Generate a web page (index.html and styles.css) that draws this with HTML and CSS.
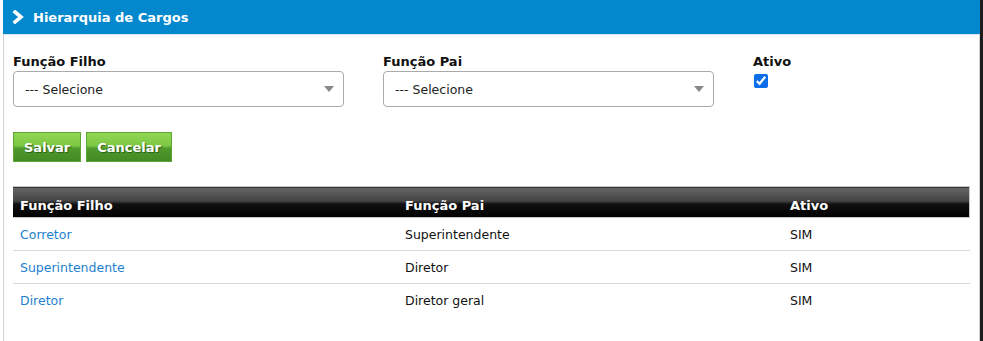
FILE: index.html
```html
<!DOCTYPE html>
<html lang="pt-BR">
<head>
  <meta charset="UTF-8" />
  <title>Hierarquia de Cargos</title>
  <link rel="stylesheet" href="styles.css">
</head>
<body>
  <div class="panel">
    <div class="panel-title">
      <svg class="chev" width="12" height="14" viewBox="0 0 12 14">
        <polyline points="3,2 9,7 3,12" fill="none" stroke="#fff" stroke-width="3.6" stroke-linecap="square" />
      </svg>
      <span>Hierarquia de Cargos</span>
    </div>

    <div class="panel-body">
      <form class="filters">
        <div class="field">
          <label for="filho">Função Filho</label>
          <div class="select">
            <select id="filho"><option>--- Selecione</option></select>
            <span class="caret"></span>
          </div>
        </div>
        <div class="field">
          <label for="pai">Função Pai</label>
          <div class="select">
            <select id="pai"><option>--- Selecione</option></select>
            <span class="caret"></span>
          </div>
        </div>
        <div class="field field-check">
          <label for="ativo">Ativo</label>
          <input type="checkbox" id="ativo" checked />
        </div>
      </form>

      <div class="actions">
        <button type="button" class="btn">Salvar</button>
        <button type="button" class="btn">Cancelar</button>
      </div>

      <table class="grid">
        <thead>
          <tr>
            <th class="c1">Função Filho</th>
            <th class="c2">Função Pai</th>
            <th>Ativo</th>
          </tr>
        </thead>
        <tbody>
          <tr><td><a href="#">Corretor</a></td><td>Superintendente</td><td>SIM</td></tr>
          <tr><td><a href="#">Superintendente</a></td><td>Diretor</td><td>SIM</td></tr>
          <tr><td><a href="#">Diretor</a></td><td>Diretor geral</td><td>SIM</td></tr>
        </tbody>
      </table>
    </div>
  </div>
</body>
</html>
```

FILE: styles.css
```css
html, body { margin: 0; height: 100%; }
body { background: #fff; font-family: "DejaVu Sans", Verdana, sans-serif; font-size: 12px; color: #111; padding-left: 3px; border-right: 3px solid #1c1c1c; box-sizing: border-box; }
.panel { height: 100%; border-left: 1px solid #d4d4d4; border-right: 1px solid #d4d4d4; box-sizing: border-box; }
.panel-title { display: flex; align-items: center; height: 34px; margin: 0 -1px; padding-left: 9px; background: #0388cd; color: #fff; font-weight: bold; font-size: 13px; border-bottom: 1px solid #d6e6f2; }
.chev { margin-right: 9px; }
.panel-body { padding: 19px 9px 0 9px; }

.filters { display: flex; }
.field { width: 370px; }
.field label { display: block; font-weight: bold; font-size: 13px; line-height: 15px; margin-bottom: 2px; color: #111; }
.field-check { width: auto; }
.field-check input { margin: 3px 0 0 1px; width: 14px; height: 14px; accent-color: #0a6ee8; }

.select { position: relative; width: 331px; }
.select select { width: 100%; height: 36px; padding: 0 11px; font-family: inherit; font-size: 12.5px; color: #222; background: #fff; border: 1px solid #aaa; border-radius: 4px; appearance: none; -webkit-appearance: none; }
.caret { position: absolute; right: 10px; top: 15px; border-left: 5px solid transparent; border-right: 5px solid transparent; border-top: 6px solid #888; pointer-events: none; }

.actions { display: flex; gap: 5px; margin-top: 25px; }
.btn { height: 30px; padding: 0 10px; border: 1px solid #5aa533; background: linear-gradient(#92d656 0%, #7cc843 45%, #4f9a2b 55%, #438a23 100%); color: #fff; font-family: inherit; font-weight: bold; font-size: 13px; text-shadow: 1px 1px 1px #2e5d18; cursor: pointer; }

.grid { width: 957px; margin-top: 24px; border-collapse: collapse; }
.grid th { height: 26px; padding: 0 7px 4px 7px; text-align: left; color: #fff; font-size: 13px; background: linear-gradient(#666 0%, #444 45%, #111 55%, #000 100%); border: 1px solid #c8c8c8; border-left: none; vertical-align: bottom; }
.grid th.c1, .grid th.c2 { border-right: none; }
.grid th.c1 { width: 371px; }
.grid th.c2 { width: 371px; }
.grid td { height: 32px; padding: 0 7px; border-bottom: 1px solid #d8d8d8; font-size: 12.5px; color: #111; }
.grid tr:last-child td { border-bottom: none; }
.grid a { color: #1d7fd0; text-decoration: none; }
```
